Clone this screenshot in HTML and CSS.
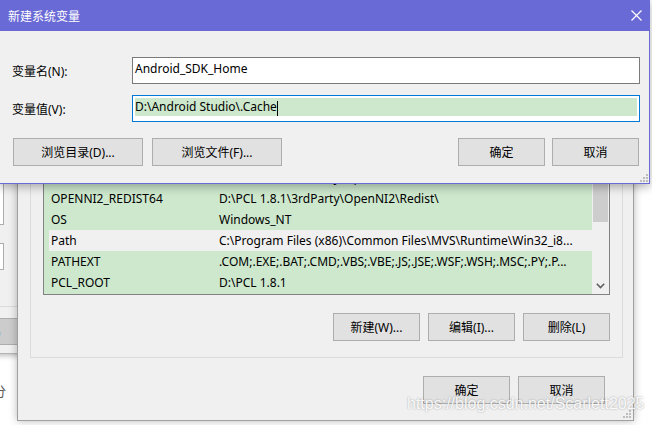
FILE: index.html
```html
<!DOCTYPE html>
<html lang="zh-CN">
<head>
<meta charset="utf-8">
<title>新建系统变量</title>
<link rel="stylesheet" href="styles.css">
</head>
<body>
<div class="desktop">

  <div class="back-win">
    <div class="bw-field bw-f1"></div>
    <div class="bw-field bw-f2"></div>
    <div class="bw-foot"><div class="bw-btn">应用(A)</div></div>
  </div>
  <div class="page-text">分</div>

  <div class="env-win">
    <div class="group">
      <div class="list">
        <div class="rows">
          <div class="row"></div>
          <div class="row"></div>
          <div class="row"></div>
          <div class="row"><span class="c1">OPENNI2_LIB64</span><span class="c2">D:\PCL 1.8.1\3rdParty\OpenNI2\Lib\</span></div>
          <div class="row"><span class="c1">OPENNI2_REDIST64</span><span class="c2">D:\PCL 1.8.1\3rdParty\OpenNI2\Redist\</span></div>
          <div class="row"><span class="c1">OS</span><span class="c2">Windows_NT</span></div>
          <div class="row sel"><span class="c1">Path</span><span class="c2">C:\Program Files (x86)\Common Files\MVS\Runtime\Win32_i8...</span></div>
          <div class="row"><span class="c1">PATHEXT</span><span class="c2">.COM;.EXE;.BAT;.CMD;.VBS;.VBE;.JS;.JSE;.WSF;.WSH;.MSC;.PY;.P...</span></div>
          <div class="row"><span class="c1">PCL_ROOT</span><span class="c2">D:\PCL 1.8.1</span></div>
        </div>
        <div class="vscroll">
          <div class="sb-btn"></div>
          <div class="thumb"></div>
          <div class="sb-fill"></div>
          <div class="sb-btn">
            <svg width="9" height="6" viewBox="0 0 9 6"><path d="M0.8 0.8 L4.5 4.5 L8.2 0.8" fill="none" stroke="#606060" stroke-width="1.6"/></svg>
          </div>
        </div>
      </div>
      <div class="btns">
        <button class="btn w87">新建(W)...</button>
        <button class="btn w87">编辑(I)...</button>
        <button class="btn w87">删除(L)</button>
      </div>
    </div>
    <div class="foot">
      <button class="btn w87">确定</button>
      <button class="btn w87">取消</button>
    </div>
    <svg class="grip env-grip" width="8" height="8" viewBox="0 0 8 8"><g fill="#bdbdbd"><rect x="6" y="0" width="2" height="2"/><rect x="3" y="3" width="2" height="2"/><rect x="6" y="3" width="2" height="2"/><rect x="0" y="6" width="2" height="2"/><rect x="3" y="6" width="2" height="2"/><rect x="6" y="6" width="2" height="2"/></g></svg>
  </div>

  <div class="dlg">
    <div class="titlebar">
      <span class="title">新建系统变量</span>
      <svg class="close" width="11" height="11" viewBox="0 0 11 11"><path d="M0.5 0.5 L10.5 10.5 M10.5 0.5 L0.5 10.5" stroke="#ffffff" stroke-width="1.2"/></svg>
    </div>
    <div class="dlg-body">
      <div class="field">
        <span class="label">变量名(N):</span>
        <div class="input">Android_SDK_Home</div>
      </div>
      <div class="field f2">
        <span class="label">变量值(V):</span>
        <div class="input focus"><div class="selection">D:\Android Studio\.Cache<span class="caret"></span></div></div>
      </div>
      <div class="actions">
        <button class="btn w130 first">浏览目录(D)...</button>
        <button class="btn w130">浏览文件(F)...</button>
        <span class="spacer"></span>
        <button class="btn w87">确定</button>
        <button class="btn w87 last">取消</button>
      </div>
    </div>
    <svg class="grip dlg-grip" width="8" height="8" viewBox="0 0 8 8"><g fill="#bdbdbd"><rect x="6" y="0" width="2" height="2"/><rect x="3" y="3" width="2" height="2"/><rect x="6" y="3" width="2" height="2"/><rect x="0" y="6" width="2" height="2"/><rect x="3" y="6" width="2" height="2"/><rect x="6" y="6" width="2" height="2"/></g></svg>
  </div>

  <div class="watermark">https://blog.csdn.net/Scarlett2025</div>
</div>
</body>
</html>
```

FILE: styles.css
```css
html, body {
  margin: 0;
  padding: 0;
}
body {
  width: 652px;
  height: 425px;
  overflow: hidden;
  background: #ffffff;
  font-family: "Noto Sans", "Noto Sans CJK SC", sans-serif;
  font-size: 12px;
  color: #000;
}
.desktop {
  position: relative;
  width: 652px;
  height: 425px;
  overflow: hidden;
}

/* far back window (System Properties) */
.back-win {
  position: absolute;
  left: -300px;
  top: 150px;
  width: 330px;
  height: 204px;
  box-sizing: border-box;
  background: #f0f0f0;
  border: 1px solid #b4b4b4;
  box-shadow: 0 2px 5px rgba(0,0,0,0.25);
  display: flex;
  flex-direction: column;
  align-items: flex-end;
  padding-right: 25px;
}
.bw-field {
  width: 200px;
  box-sizing: border-box;
  background: #ffffff;
  border: 1px solid #adadad;
}
.bw-f1 { height: 74px; margin-top: 0; }
.bw-f2 { height: 27px; margin-top: 18px; }
.bw-foot {
  align-self: stretch;
  margin-top: 36px;
  margin-right: -25px;
  padding-right: 3px;
  flex: 1;
  border-top: 1px solid #dadada;
  display: flex;
  justify-content: flex-end;
  align-items: flex-start;
  padding-top: 11px;
}
.bw-btn {
  width: 90px;
  height: 27px;
  box-sizing: border-box;
  background: #cccccc;
  border: 1px solid #adadad;
  display: flex;
  align-items: center;
  justify-content: center;
  color: #444;
}
.page-text {
  position: absolute;
  left: -7px;
  top: 381px;
  font-size: 13px;
  color: #555;
}

/* environment variables window */
.env-win {
  position: absolute;
  left: 17px;
  top: 60px;
  width: 617px;
  height: 361px;
  box-sizing: border-box;
  background: #f0f0f0;
  border: 1px solid #a0a0a0;
  box-shadow: 0 0 8px rgba(0,0,0,0.28);
  padding: 19px 0 0 12px;
}
.group {
  width: 593px;
  height: 278px;
  box-sizing: border-box;
  border: 1px solid #dcdcdc;
  padding: 22px 12px 0 12px;
}
.list {
  height: 192px;
  box-sizing: border-box;
  border: 1px solid #828282;
  background: #cde8cd;
  display: flex;
  overflow: hidden;
}
.rows {
  flex: 1;
  min-width: 0;
}
.row {
  display: flex;
  height: 21px;
  line-height: 21px;
  white-space: nowrap;
}
.c1 {
  width: 168px;
  box-sizing: border-box;
  padding-left: 7px;
  flex: none;
  overflow: hidden;
}
.c2 {
  flex: 1;
  min-width: 0;
  padding-left: 7px;
  overflow: hidden;
}
.row.sel {
  margin-left: 5px;
  background: #f0f0f0;
}
.row.sel .c1 {
  width: 163px;
  padding-left: 2px;
}
.vscroll {
  width: 17px;
  flex: none;
  background: #f0f0f0;
  display: flex;
  flex-direction: column;
  align-items: center;
}
.sb-btn {
  height: 17px;
  width: 17px;
  flex: none;
  display: flex;
  align-items: center;
  justify-content: center;
}
.thumb {
  width: 15px;
  height: 72px;
  margin-top: 29px;
  background: #cdcdcd;
  flex: none;
}
.sb-fill { flex: 1; }

.btn {
  box-sizing: border-box;
  height: 28px;
  border: 1px solid #adadad;
  background: #e1e1e1;
  font: inherit;
  color: #000;
  padding: 0;
  margin: 0;
  display: flex;
  align-items: center;
  justify-content: center;
  white-space: nowrap;
}
.w87 { width: 87px; }
.w130 { width: 130px; }

.btns {
  display: flex;
  justify-content: flex-end;
  gap: 8px;
  margin-top: 18px;
}
.foot {
  display: flex;
  justify-content: flex-end;
  gap: 8px;
  margin-top: 18px;
  padding-right: 28px;
}
.grip { position: absolute; }
.env-grip { right: 2px; bottom: 2px; }

/* front dialog */
.dlg {
  position: absolute;
  left: -1px;
  top: -1px;
  width: 651px;
  height: 185px;
  box-sizing: border-box;
  border: 1px solid #6a6ad6;
  background: #f0f0f0;
  box-shadow: 0 3px 9px rgba(0,0,0,0.3);
}
.titlebar {
  height: 31px;
  background: #6a6ad6;
  color: #ffffff;
  display: flex;
  align-items: center;
  padding: 0 7px 0 8px;
  font-size: 12px;
}
.title { flex: 1; }
.dlg-body {
  padding: 26px 9px 0 12px;
}
.field {
  display: flex;
  align-items: center;
  height: 27px;
}
.field.f2 { margin-top: 11px; }
.label {
  width: 120px;
  flex: none;
}
.input {
  flex: 1;
  height: 27px;
  box-sizing: border-box;
  border: 1px solid #7a7a7a;
  background: #ffffff;
  padding: 0 2px;
  line-height: 21px;
  white-space: nowrap;
}
.input.focus {
  border-color: #0078d7;
  padding: 2px 2px 5px 2px;
  line-height: 18px;
}
.selection {
  height: 18px;
  background: #cde8cd;
  display: flex;
  align-items: center;
}
.caret {
  display: inline-block;
  width: 1px;
  height: 15px;
  margin-top: 2px;
  background: #000;
}
.actions {
  display: flex;
  margin-top: 16px;
  gap: 9px;
}
.actions .first { margin-left: 1px; }
.actions .spacer { flex: 1; }
.actions .w87 + .w87 { margin-left: -2px; }
.actions .last { margin-right: 1px; }
.dlg-grip { right: 1px; bottom: 1px; }

.watermark {
  position: absolute;
  left: 407px;
  top: 395px;
  font-family: "Liberation Sans", sans-serif;
  font-size: 16px;
  color: rgba(255,255,255,0.92);
  text-shadow: 0 0 2px rgba(0,0,0,0.35);
  white-space: nowrap;
}
```
